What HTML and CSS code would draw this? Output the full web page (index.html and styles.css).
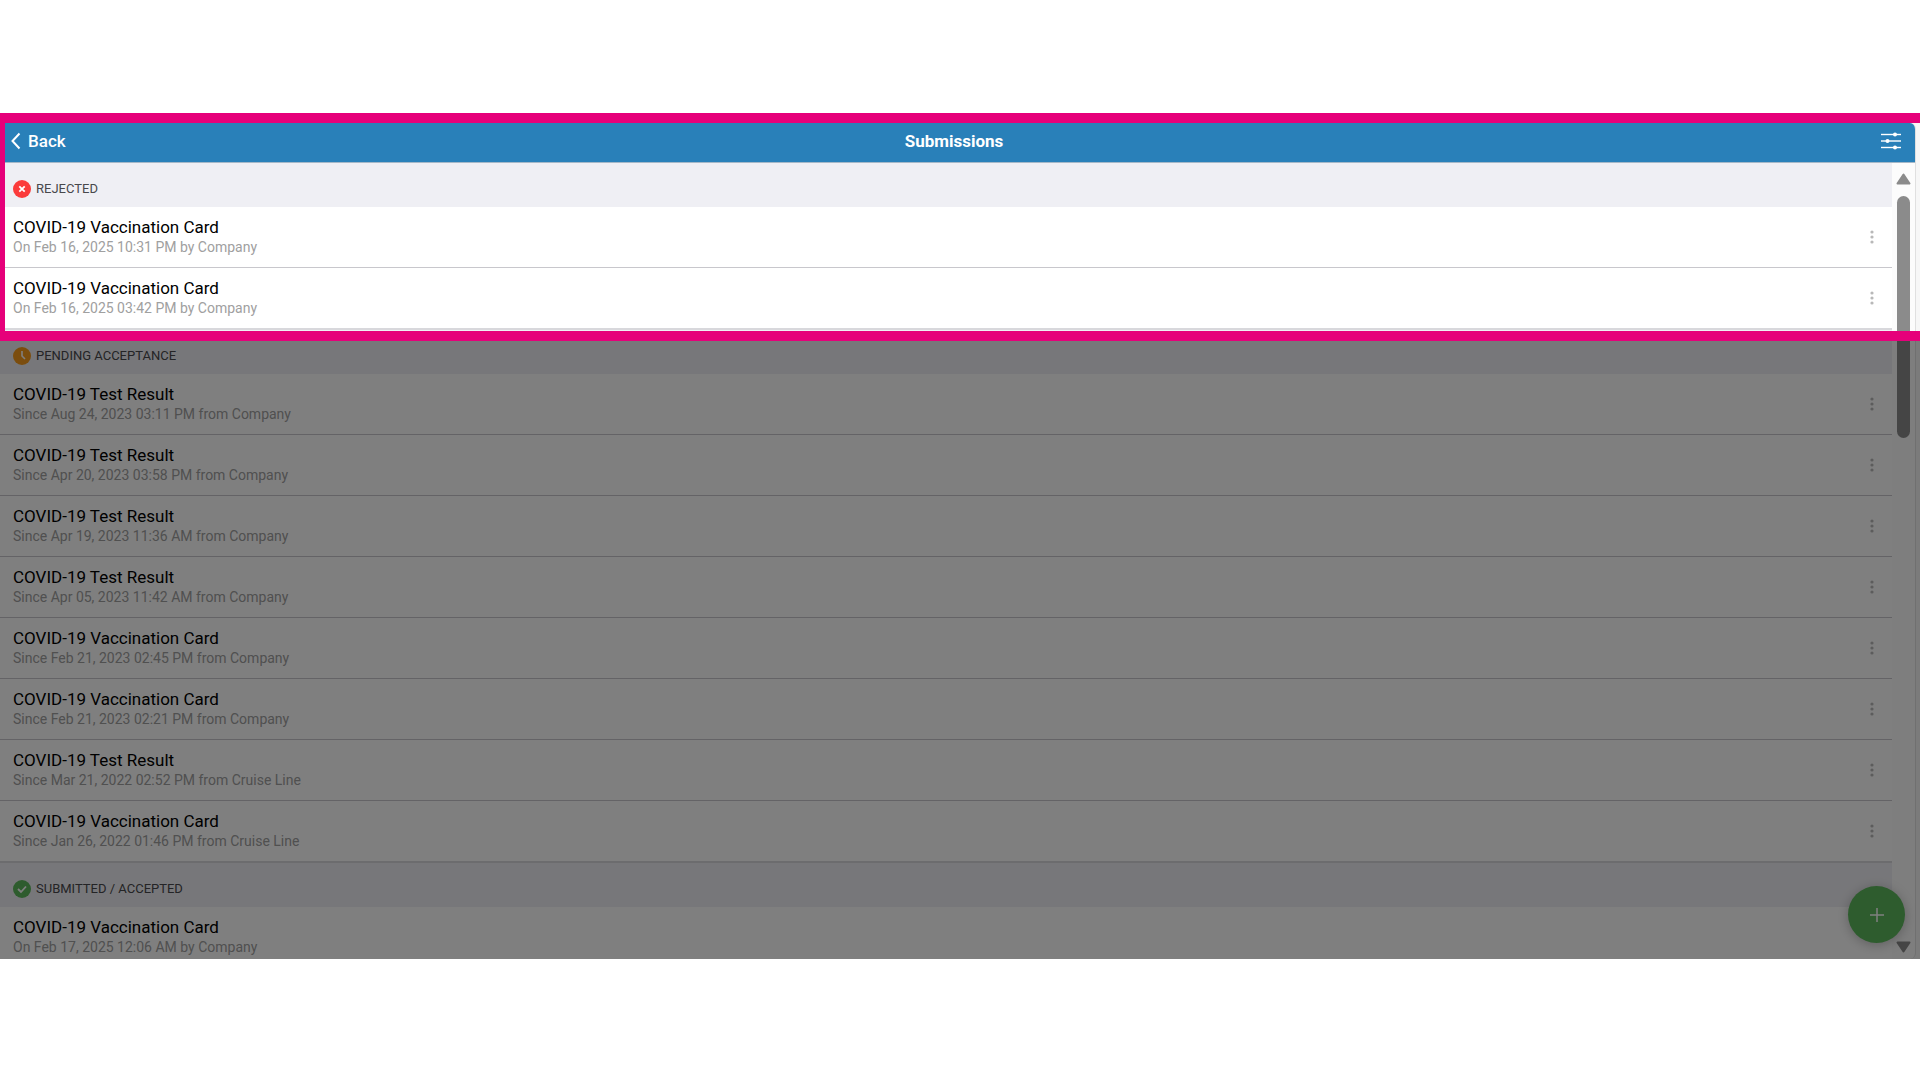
FILE: index.html
```html
<!DOCTYPE html>
<html lang="en">
<head>
    <meta charset="UTF-8">
    <meta name="viewport" content="width=device-width, initial-scale=1.0">
    <title>Submissions</title>
    <link rel="stylesheet" href="styles.css">
</head>
<body>
    <svg class="defs" width="0" height="0" aria-hidden="true">
        <symbol id="dots" viewBox="0 0 4 14">
            <circle cx="2" cy="2" r="1.6"/>
            <circle cx="2" cy="7" r="1.6"/>
            <circle cx="2" cy="12" r="1.6"/>
        </symbol>
    </svg>
    <div class="app">
        <div class="window">
            <header class="topbar">
                <a class="back" href="#">
                    <svg width="10" height="18" viewBox="0 0 10 18" fill="none" stroke="#fff" stroke-width="2"><path d="M8.5 1.5L1.5 9l7 7.5"/></svg>
                    Back
                </a>
                <h1>Submissions</h1>
                <button class="filter" type="button" aria-label="Filter">
                    <svg width="20" height="18" viewBox="0 0 20 18" fill="#fff"><path d="M0 2h20v1H0zM0 8.500h20v1H0zM0 15h20v1H0z" stroke="#fff" stroke-width=".4"/><circle cx="14" cy="2.500" r="2"/><circle cx="6.500" cy="9" r="2"/><circle cx="14" cy="15.500" r="2"/></svg>
                </button>
            </header>
            <div class="content">
                <main class="lists">
                    <section>
                        <h2>
                            <svg class="status" viewBox="0 0 18 18"><circle cx="9" cy="9" r="9" fill="#fb3b3b"/><path d="M6.300 6.300l5.400 5.400M11.700 6.300l-5.400 5.400" stroke="#fff" stroke-width="1.800"/></svg>
                            Rejected
                        </h2>
                        <ul>
                            <li>
                                <div><h3>COVID-19 Vaccination Card</h3><p>On Feb 16, 2025 10:31 PM by Company</p></div>
                                <button class="more" type="button" aria-label="More"><svg><use href="#dots"/></svg></button>
                            </li>
                            <li>
                                <div><h3>COVID-19 Vaccination Card</h3><p>On Feb 16, 2025 03:42 PM by Company</p></div>
                                <button class="more" type="button" aria-label="More"><svg><use href="#dots"/></svg></button>
                            </li>
                        </ul>
                    </section>
                    <section>
                        <h2>
                            <svg class="status" viewBox="0 0 18 18"><circle cx="9" cy="9" r="9" fill="#f79b1c"/><path d="M9 4v5l3 3" fill="none" stroke="#fff" stroke-width="1.600"/></svg>
                            Pending acceptance
                        </h2>
                        <ul>
                            <li>
                                <div><h3>COVID-19 Test Result</h3><p>Since Aug 24, 2023 03:11 PM from Company</p></div>
                                <button class="more" type="button" aria-label="More"><svg><use href="#dots"/></svg></button>
                            </li>
                            <li>
                                <div><h3>COVID-19 Test Result</h3><p>Since Apr 20, 2023 03:58 PM from Company</p></div>
                                <button class="more" type="button" aria-label="More"><svg><use href="#dots"/></svg></button>
                            </li>
                            <li>
                                <div><h3>COVID-19 Test Result</h3><p>Since Apr 19, 2023 11:36 AM from Company</p></div>
                                <button class="more" type="button" aria-label="More"><svg><use href="#dots"/></svg></button>
                            </li>
                            <li>
                                <div><h3>COVID-19 Test Result</h3><p>Since Apr 05, 2023 11:42 AM from Company</p></div>
                                <button class="more" type="button" aria-label="More"><svg><use href="#dots"/></svg></button>
                            </li>
                            <li>
                                <div><h3>COVID-19 Vaccination Card</h3><p>Since Feb 21, 2023 02:45 PM from Company</p></div>
                                <button class="more" type="button" aria-label="More"><svg><use href="#dots"/></svg></button>
                            </li>
                            <li>
                                <div><h3>COVID-19 Vaccination Card</h3><p>Since Feb 21, 2023 02:21 PM from Company</p></div>
                                <button class="more" type="button" aria-label="More"><svg><use href="#dots"/></svg></button>
                            </li>
                            <li>
                                <div><h3>COVID-19 Test Result</h3><p>Since Mar 21, 2022 02:52 PM from Cruise Line</p></div>
                                <button class="more" type="button" aria-label="More"><svg><use href="#dots"/></svg></button>
                            </li>
                            <li>
                                <div><h3>COVID-19 Vaccination Card</h3><p>Since Jan 26, 2022 01:46 PM from Cruise Line</p></div>
                                <button class="more" type="button" aria-label="More"><svg><use href="#dots"/></svg></button>
                            </li>
                        </ul>
                    </section>
                    <section>
                        <h2>
                            <svg class="status" viewBox="0 0 18 18"><circle cx="9" cy="9" r="9" fill="#5cb85c"/><path d="M5 9l3 3 5-5.500" fill="none" stroke="#fff" stroke-width="1.800"/></svg>
                            Submitted / Accepted
                        </h2>
                        <ul>
                            <li>
                                <div><h3>COVID-19 Vaccination Card</h3><p>On Feb 17, 2025 12:06 AM by Company</p></div>
                            </li>
                        </ul>
                    </section>
                </main>
                <div class="scrollbar" aria-hidden="true">
                    <svg width="15" height="12" viewBox="0 0 15 12"><path d="M7.500 1.500L13.500 10.500h-12z" fill="#8b8b8b" stroke="#8b8b8b" stroke-width="2" stroke-linejoin="round"/></svg>
                    <div class="track"><div class="thumb"></div></div>
                    <svg width="15" height="12" viewBox="0 0 15 12"><path d="M7.500 10.500L1.500 1.500h12z" fill="#8b8b8b" stroke="#8b8b8b" stroke-width="2" stroke-linejoin="round"/></svg>
                </div>
            </div>
            <button class="add" type="button" aria-label="Add submission">
                <svg width="14" height="14" viewBox="0 0 14 14" stroke="#fff" stroke-width="1.500"><path d="M7 0v14M0 7h14"/></svg>
            </button>
        </div>
        <!-- everything outside the frame is dimmed -->
        <div class="highlight"></div>
    </div>
</body>
</html>
```

FILE: styles.css
```css
* {
    box-sizing: border-box;
}
body {
    margin: 0;
    padding: 113px 0 0;
    height: 100vh;
    background-color: #fff;
    font-family: Roboto, sans-serif;
    color: #000;
    overflow: hidden;
}
h1, h2, h3, p, ul {
    margin: 0;
    padding: 0;
    font-weight: 400;
}
button {
    padding: 0;
    border: 0;
    background: none;
    cursor: pointer;
}
svg {
    display: block;
}
.defs {
    position: absolute;
}
.app {
    position: relative;
    height: calc(100vh - 234px);
    padding: 10px 4px 0 0;
    background-color: #f7f7f7;
    overflow: hidden;
}
.window {
    position: relative;
    display: flex;
    flex-direction: column;
    height: 100%;
    border-right: 1px solid #e0e0e0;
    border-radius: 0 6px 6px 0;
    background-color: #fcfcfc;
    overflow: hidden;
}
/* Top bar */
.topbar {
    display: grid;
    grid-template-columns: 1fr auto 1fr;
    align-items: center;
    flex: none;
    height: 40px;
    padding: 0 14px 3px 11px;
    border-bottom: 1px solid #a5b8c8;
    background-color: #2980b9;
    color: #fff;
}
.back {
    display: flex;
    align-items: center;
    gap: 7px;
    color: #fff;
    font-size: 17px;
    font-weight: 500;
    text-decoration: none;
}
h1 {
    margin-right: 4px;
    font-size: 17px;
    font-weight: 700;
}
.filter {
    justify-self: end;
}
/* Lists */
.content {
    display: flex;
    flex: 1;
    min-height: 0;
}
.lists {
    flex: 1;
    overflow: hidden;
}
section + section {
    border-top: 2px solid #d8d8dc;
}
h2 {
    display: flex;
    align-items: center;
    gap: 5px;
    height: 44px;
    padding: 7px 13px 0;
    background-color: #efeff4;
    color: #48484c;
    font-size: 13px;
    text-transform: uppercase;
}
.status {
    width: 18px;
    height: 18px;
}
ul {
    list-style: none;
}
li {
    display: flex;
    align-items: center;
    justify-content: space-between;
    height: 60px;
    padding: 0 18px 0 13px;
    background-color: #fff;
}
li + li {
    height: 61px;
    border-top: 1px solid #c8c7cc;
}
h3 {
    font-size: 17px;
    line-height: 20px;
}
p {
    color: #a0a0a0;
    font-size: 14px;
    line-height: 20px;
}
.more svg {
    width: 4px;
    height: 14px;
    fill: #b8b8b8;
}
/* Scrollbar */
.scrollbar {
    display: flex;
    flex-direction: column;
    align-items: center;
    width: 23px;
    padding: 10px 0 6px;
}
.track {
    flex: 1;
    margin: 11px 0;
}
.thumb {
    width: 13px;
    height: 33%;
    border-radius: 7px;
    background-color: #8b8b8b;
}
.add {
    position: absolute;
    right: 10px;
    bottom: 16px;
    display: flex;
    align-items: center;
    justify-content: center;
    width: 57px;
    height: 57px;
    border-radius: 50%;
    background-color: #5cb85c;
    box-shadow: 0 2px 12px rgba(0, 0, 0, 0.25);
}
.highlight {
    position: absolute;
    top: 0;
    left: -5px;
    right: -10px;
    height: 228px;
    border: 10px solid #e6007a;
    box-shadow: 0 0 0 2000px rgba(0, 0, 0, 0.5);
    pointer-events: none;
}
```
